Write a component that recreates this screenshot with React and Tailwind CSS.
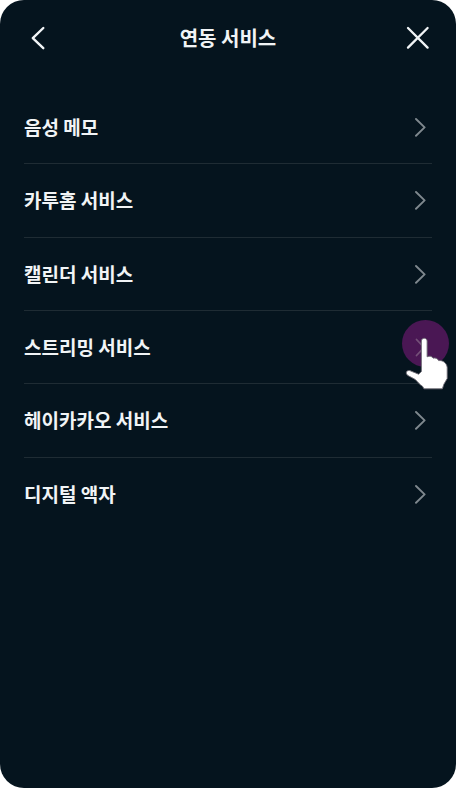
import React from "react";

const services = [
  { id: "memo", label: "음성 메모" },
  { id: "home", label: "카투홈 서비스" },
  { id: "calendar", label: "캘린더 서비스" },
  { id: "streaming", label: "스트리밍 서비스", pressed: true },
  { id: "kakao", label: "헤이카카오 서비스" },
  { id: "frame", label: "디지털 액자" },
];

function ChevronRight() {
  return (
    <svg width="12" height="20" viewBox="0 0 12 20" fill="none" stroke="#7f888e" strokeWidth="1.9" strokeLinecap="round" strokeLinejoin="round" aria-hidden="true">
      <path d="M2 2 10.6 10.4 2 18.8" />
    </svg>
  );
}

function TapPointer() {
  return (
    <span className="pointer-events-none absolute top-2 -right-[17px] size-12" aria-hidden="true">
      <svg className="overflow-visible" width="48" height="48" viewBox="0 0 48 48">
        <circle cx="24.5" cy="24.5" r="23.5" fill="#4a1754" />
        <path d="M15.5 20.5 23 28.5 15.5 36.5" fill="none" stroke="#745078" strokeWidth="1.8" strokeLinecap="round" />
        <path
          d="M20.4 22C20.4 18.4 26.1 18.4 26.1 22V37.8C28.6 36.6 31 37.2 32.2 39.2C34.4 38.6 36.6 39.4 37.6 41.6C41.6 41 45.8 44 46.2 48.5V59.5L42.8 65.4L41.4 69.8H23L21.6 67.4C18.8 65.6 16.6 62.8 14.2 60.4L7 56.6C4 54.6 5.2 51 8.8 51.6L17.6 55.2L20.4 52.6Z"
          fill="#fff"
          stroke="#6d6a74"
          strokeWidth="0.9"
          strokeLinejoin="round"
        />
      </svg>
    </span>
  );
}

export default function App() {
  return (
    <div className="min-h-screen bg-white font-['Noto_Sans_CJK_KR',sans-serif] text-[#f1f4f6]">
      <main className="min-h-screen overflow-hidden rounded-3xl bg-[#05141e]">
        <header className="flex h-[75px] items-center justify-between px-6">
          <button type="button" aria-label="뒤로" className="flex size-7 items-center justify-center">
            <svg width="28" height="28" viewBox="0 0 28 28" fill="none" stroke="currentColor" strokeWidth="2.4" strokeLinecap="round" strokeLinejoin="round" aria-hidden="true">
              <path d="M19.3 4 8.8 14.2 19.3 24.2" />
            </svg>
          </button>
          <h1 className="text-[20px] leading-7 font-bold">연동 서비스</h1>
          <button type="button" aria-label="닫기" className="flex size-7 items-center justify-center">
            <svg width="28" height="28" viewBox="0 0 28 28" fill="none" stroke="currentColor" strokeWidth="2.3" strokeLinecap="round" aria-hidden="true">
              <path d="M4 4 23.6 23.6M23.6 4 4 23.6" />
            </svg>
          </button>
        </header>
        <ul className="mx-6 mt-4 grid h-[440px] grid-rows-6 divide-y divide-[#1f2c34]">
          {services.map((service) => (
            <li key={service.id} className="relative">
              <button type="button" className="flex size-full items-center justify-between pr-1.5 text-left text-[19px] leading-7 font-bold">
                <span>{service.label}</span>
                <ChevronRight />
              </button>
              {service.pressed && <TapPointer />}
            </li>
          ))}
        </ul>
      </main>
    </div>
  );
}
